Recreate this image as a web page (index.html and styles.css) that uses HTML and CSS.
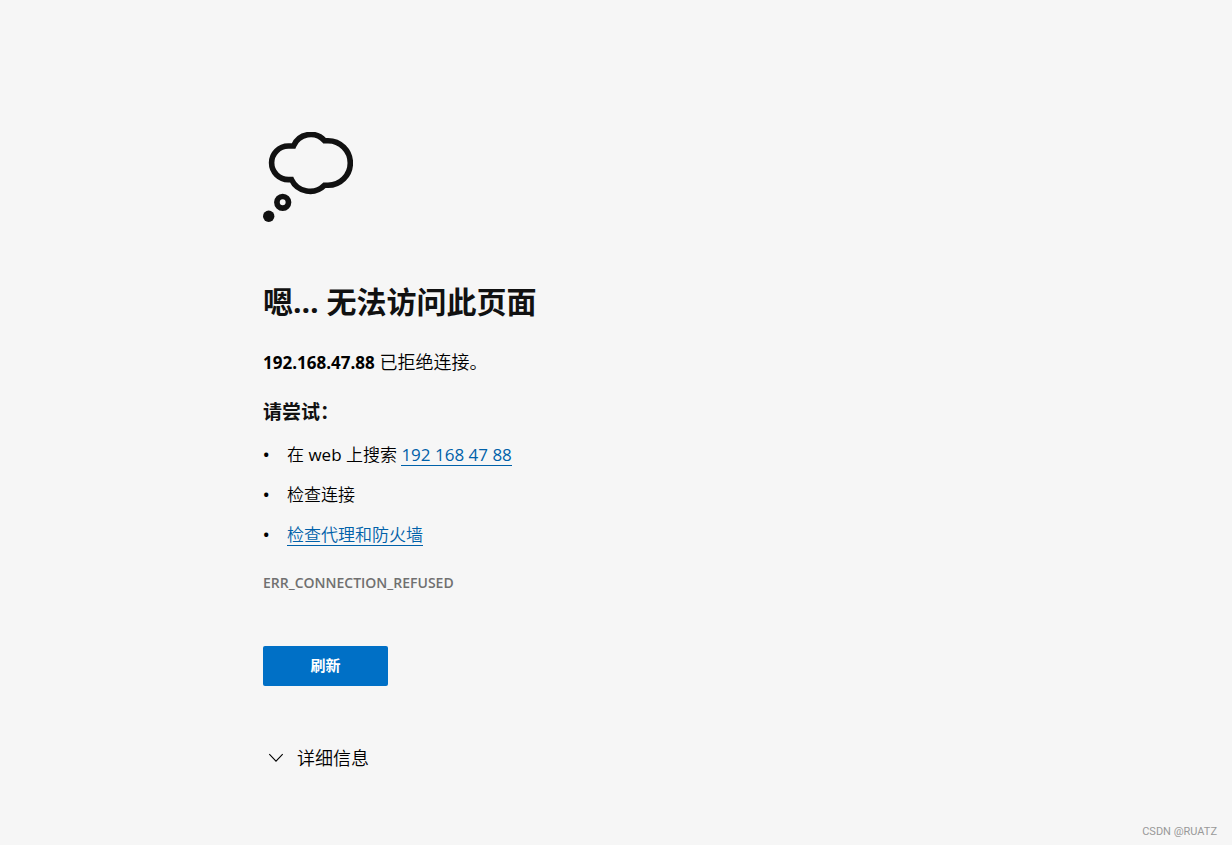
FILE: index.html
```html
<!DOCTYPE html>
<html lang="zh-CN">
<head>
<meta charset="utf-8">
<meta name="viewport" content="width=device-width, initial-scale=1">
<title>192.168.47.88</title>
<link rel="stylesheet" href="styles.css">
</head>
<body>
<main class="error-page">
  <svg class="cloud" viewBox="0 0 90 90" aria-hidden="true">
    <path d="M30.5 14H25.4A16.8 16.8 0 0 0 25.4 47.6H28.5A20.5 20.5 0 0 0 61.5 53.3H65A22.3 22.3 0 0 0 65 8.7H61.5A18.5 18.5 0 0 0 30.5 14Z" fill="none" stroke="#111" stroke-width="5.6"/>
    <circle cx="19.7" cy="70.3" r="5.8" fill="none" stroke="#111" stroke-width="5.7"/>
    <circle cx="5.7" cy="84.3" r="5.7" fill="#111"/>
  </svg>
  <h1 class="title">嗯… 无法访问此页面</h1>
  <p class="summary"><strong>192.168.47.88</strong> 已拒绝连接。</p>
  <h2 class="subtitle">请尝试：</h2>
  <ul class="suggestions">
    <li><span>在 <span class="latin">web</span> 上搜索 <a class="latin" href="#search">192 168 47 88</a></span></li>
    <li>检查连接</li>
    <li><a href="#proxy">检查代理和防火墙</a></li>
  </ul>
  <p class="code">ERR_CONNECTION_REFUSED</p>
  <button class="refresh" type="button">刷新</button>
  <button class="details" type="button">
    <svg class="chevron" viewBox="0 0 16 10" aria-hidden="true"><path d="M1.3 1.2 8 8.2 14.7 1.2" fill="none" stroke="currentColor" stroke-width="1.1"/></svg>
    <span>详细信息</span>
  </button>
</main>
<footer class="watermark">CSDN @RUATZ</footer>
</body>
</html>
```
FILE: styles.css
```css
* {
  box-sizing: border-box;
}

body {
  display: flex;
  flex-direction: column;
  min-height: 100vh;
  margin: 0;
  background: #f6f6f6;
  color: #000;
  font: 350 18px/24px "Open Sans", "Noto Sans CJK SC", sans-serif;
}

.error-page {
  display: flex;
  flex-direction: column;
  align-items: flex-start;
  flex: 1;
  width: 100%;
  max-width: 706px;
  margin: 0 auto;
  padding-top: 132px;
}

.cloud {
  width: 90px;
  height: 90px;
}

.title {
  margin: 60px 0 0;
  color: #111;
  font-size: 30px;
  font-weight: 700;
  line-height: 40px;
}

.summary {
  margin: 28px 0 0;
}

.summary strong {
  font-size: 17px;
  font-weight: 700;
}

.subtitle {
  margin: 25px 0 0;
  color: #111;
  font-size: 19px;
  font-weight: 700;
  line-height: 24px;
}

.suggestions {
  display: flex;
  flex-direction: column;
  gap: 16px;
  margin: 19px 0 0;
  padding: 0;
  font-size: 17px;
  list-style: none;
}

.suggestions li {
  display: flex;
}

.suggestions li::before {
  content: "•";
  width: 24px;
  font-weight: 600;
}

.suggestions a {
  display: inline-block;
  height: 23px;
  border-bottom: 1px solid #0061a9;
  color: #0061a9;
  text-decoration: none;
}

.latin {
  font-weight: 400;
}

.code {
  margin: 26px 0 0;
  color: #707070;
  font-size: 14px;
  font-weight: 600;
  line-height: 20px;
}

.refresh {
  width: 125px;
  height: 40px;
  margin-top: 53px;
  padding: 0 0 2px;
  border: 0;
  border-radius: 2px;
  background: #0070c6;
  color: #fff;
  font: inherit;
  font-size: 15px;
  font-weight: 700;
}

.details {
  display: flex;
  align-items: center;
  gap: 13px;
  margin-top: 60px;
  padding: 0 0 0 5px;
  border: 0;
  background: none;
  color: inherit;
  font: inherit;
}

.chevron {
  width: 16px;
  height: 10px;
}

.watermark {
  padding: 0 15px 5px;
  color: #999;
  font: 400 11px/16px Roboto, sans-serif;
  text-align: right;
}
```
